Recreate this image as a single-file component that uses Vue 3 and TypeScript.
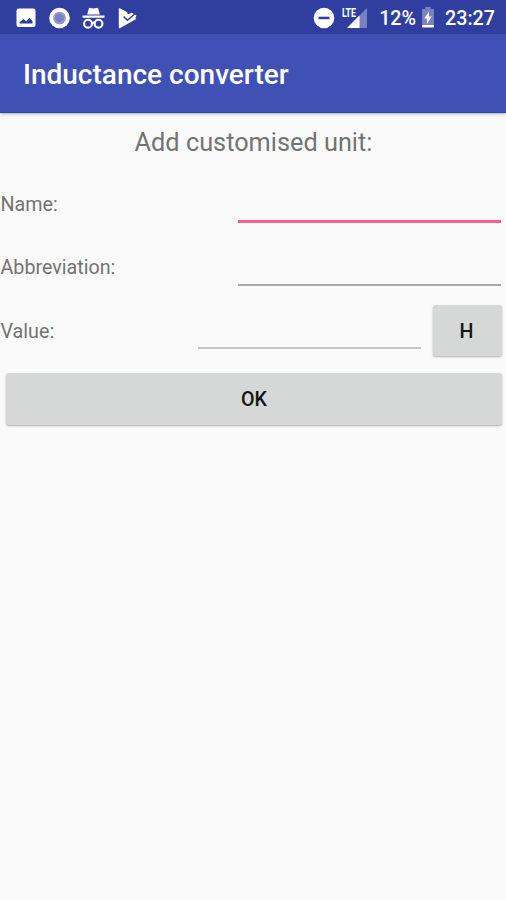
<script setup lang="ts">
import { ref } from 'vue'

const name = ref<string>('')
const abbreviation = ref<string>('')
const value = ref<string>('')
const baseUnit = 'H'
</script>

<template>
  <div class="screen">
    <div class="status-bar">
      <div class="notifications">
        <svg class="icon" width="20" height="20" viewBox="0 0 20 20">
          <path fill="#fff" fill-rule="evenodd" d="M2.500.5h15a2 2 0 0 1 2 2v14.500a2 2 0 0 1-2 2h-15a2 2 0 0 1-2-2V2.500a2 2 0 0 1 2-2zM3.500 15.500h13V13l-3.200-3-3 3.300-3-2.300-3.800 3.500z" />
        </svg>
        <svg class="icon" width="22" height="22" viewBox="0 0 22 22">
          <circle cx="11.500" cy="11" r="10.300" fill="#fff" />
          <circle cx="11.500" cy="11" r="6.300" fill="#9298d0" />
          <circle cx="11.500" cy="11" r="4.300" fill="#7880c4" />
        </svg>
        <svg class="icon" width="24" height="22" viewBox="0 0 24 22">
          <path fill="#fff" d="M6.800 1.500Q7.200.7 8.100.9L11.500 1.600 14.900.9q.9-.2 1.300.6L17.800 7.600H5.200zM.5 8.600h22v2.200H.5z" />
          <g fill="none" stroke="#fff" stroke-width="2.100">
            <circle cx="6" cy="16.700" r="3.900" />
            <circle cx="16.500" cy="16.700" r="3.900" />
            <path d="M9.800 16.200q1.450-1.200 2.900 0" />
          </g>
        </svg>
        <svg class="icon" width="20" height="22" viewBox="0 0 20 22">
          <path fill="#fff" d="M.8 2.200Q.8.800 2.200 1.500L8.400 4.800 10.400 7.200 13.800 5.800 18.500 8.600 17.300 10.900 18.200 12 2.200 20.900Q.8 21.600.8 20.200z" />
          <path fill="none" stroke="#303f9f" stroke-width="1.500" d="m5.600 9.600 3.900 3.600 7.200-6.200" />
        </svg>
      </div>
      <div class="system">
        <svg class="icon dnd" width="22" height="22" viewBox="0 0 22 22">
          <circle cx="11" cy="11" r="10.300" fill="#fff" />
          <path fill="#303f9f" d="M5.500 9.700h11v2.500h-11z" />
        </svg>
        <div class="signal">
          <svg width="20" height="20" viewBox="0 0 20 20">
            <path fill="#7882c2" d="M20 0v20H0z" />
            <path fill="#fff" d="M12.500 7.500V20H0z" />
          </svg>
          <span class="network">LTE</span>
        </div>
        <span class="percent">12%</span>
        <svg class="icon battery" width="14" height="21" viewBox="0 0 14 21">
          <path fill="#7882c2" d="M4.300 0h5.400v2H13v16H1V2h3.300z" />
          <path fill="#fff" d="M1 18h12v2.500H1zM8 4.500v5h2.800L6 17v-5.500H3.300z" />
        </svg>
        <span class="clock">23:27</span>
      </div>
    </div>

    <header class="app-bar">
      <h1>Inductance converter</h1>
    </header>

    <main>
      <h2>Add customised unit:</h2>
      <form @submit.prevent>
        <div class="row">
          <label for="name">Name:</label>
          <input id="name" v-model="name" class="wide active" type="text" autocomplete="off" />
        </div>
        <div class="row">
          <label for="abbreviation">Abbreviation:</label>
          <input id="abbreviation" v-model="abbreviation" class="wide" type="text" autocomplete="off" />
        </div>
        <div class="row">
          <label for="value">Value:</label>
          <input id="value" v-model="value" class="narrow" type="text" autocomplete="off" />
          <button class="unit" type="button">{{ baseUnit }}</button>
        </div>
        <button class="submit" type="submit">OK</button>
      </form>
    </main>
  </div>
</template>

<style>
body {
  margin: 0;
  background: #fafafa;
}
</style>

<style scoped>
.screen {
  width: 506px;
  height: 900px;
  overflow: hidden;
  background: #fafafa;
  color: #737373;
  font-family: Roboto, "Liberation Sans", sans-serif;
}

.status-bar {
  box-sizing: border-box;
  display: flex;
  align-items: center;
  justify-content: space-between;
  height: 34px;
  padding: 1px 11px 0 16px;
  background: #303f9f;
  color: #fff;
}

.notifications,
.system {
  display: flex;
  align-items: center;
}

.notifications {
  gap: 12px;
}

.icon {
  display: block;
  flex: none;
}

.signal {
  position: relative;
  width: 26px;
  height: 20px;
  margin-left: 6px;
}

.signal svg {
  display: block;
  margin-left: auto;
}

.network {
  position: absolute;
  top: -1px;
  left: 1px;
  font-size: 12px;
  font-weight: 700;
  line-height: 12px;
  letter-spacing: -0.3px;
  transform: scaleX(0.74);
  transform-origin: left;
}

.percent,
.clock {
  padding-top: 2px;
  font-size: 19.700px;
  font-weight: 500;
  line-height: 24px;
}

.percent {
  margin-left: 12px;
}

.battery {
  margin: 0 10px 0 5px;
}

.app-bar {
  position: relative;
  display: flex;
  align-items: center;
  height: 79px;
  padding: 0 23px;
  border-bottom: 1px solid #2846a8;
  box-sizing: border-box;
  background: #3f51b5;
  box-shadow: 0 1px 3px rgba(0, 0, 0, 0.3);
  color: #fff;
}

h1 {
  margin: 3px 0 0;
  font-size: 28px;
  font-weight: 500;
  line-height: 34px;
  white-space: nowrap;
}

h2 {
  margin: 0;
  padding: 13px 0 0 1px;
  font-size: 25.300px;
  font-weight: 400;
  line-height: 34px;
  text-align: center;
}

form {
  display: flex;
  flex-direction: column;
  padding-top: 12px;
}

.row {
  display: flex;
  align-items: center;
  height: 63.500px;
  padding-right: 4px;
}

label {
  flex: 1;
  padding: 2px 0 0 0.500px;
  font-size: 19.700px;
  line-height: 24px;
}

input {
  box-sizing: border-box;
  height: 37px;
  padding: 0 4px;
  border: 0;
  border-bottom: 2px solid #a9a9a9;
  outline: 0;
  background: transparent;
  color: #212121;
  font: inherit;
  font-size: 25px;
}

.wide {
  width: 263px;
  margin-right: 1px;
}

.narrow {
  width: 223px;
  margin-right: 12px;
  border-bottom-color: #c6c6c6;
}

.active {
  height: 39px;
  border-bottom: 3px solid #fa5c8f;
}

button {
  padding: 2px 0 0;
  border: 0;
  border-radius: 3px;
  background: #d6d7d7;
  box-shadow: 0 1px 2px rgba(0, 0, 0, 0.3);
  color: #151515;
  font: inherit;
  font-size: 19.700px;
  font-weight: 500;
}

.unit {
  width: 69px;
  height: 51px;
  padding-right: 2px;
}

.submit {
  height: 52px;
  margin: 10px 4px 0 6px;
}
</style>
